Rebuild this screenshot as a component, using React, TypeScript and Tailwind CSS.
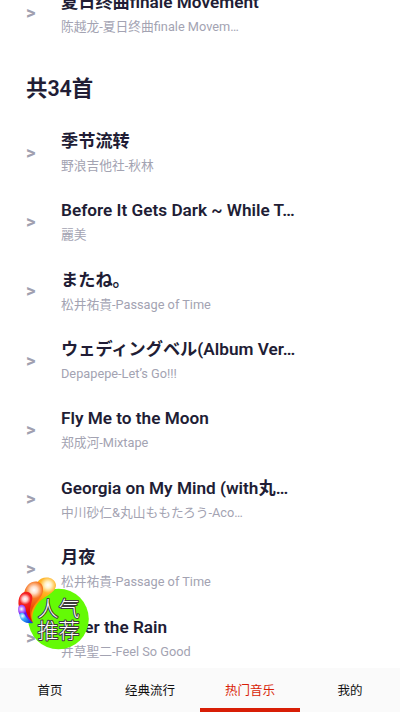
const songs = [
  { title: "夏日终曲finale Movement", sub: "陈越龙-夏日终曲finale Movem…" },
  { title: "季节流转", sub: "野浪吉他社-秋林" },
  { title: "Before It Gets Dark ~ While T…", sub: "麗美" },
  { title: "またね。", sub: "松井祐貴-Passage of Time" },
  { title: "ウェディングベル(Album Ver…", sub: "Depapepe-Let’s Go!!!" },
  { title: "Fly Me to the Moon", sub: "郑成河-Mixtape" },
  { title: "Georgia on My Mind (with丸…", sub: "中川砂仁&丸山ももたろう-Aco…" },
  { title: "月夜", sub: "松井祐貴-Passage of Time" },
  { title: "After the Rain", sub: "井草聖二-Feel So Good" },
];

const tabs = ["首页", "经典流行", "热门音乐", "我的"];

function Song({ title, sub }: { title: string; sub: string }) {
  return (
    <li className="flex h-[69.4px] shrink-0 items-center whitespace-nowrap">
      <span className="w-[35px] shrink-0 pb-[1.5px] text-[18.5px] font-bold leading-6 text-[#a0a0b0]">&gt;</span>
      <div>
        <div className="h-[25px] text-[17.2px] font-semibold leading-[25px] text-[#211d35]">{title}</div>
        <div className="h-6 text-[12.75px] leading-6 text-[#a3a3b2]">{sub}</div>
      </div>
    </li>
  );
}

function Badge() {
  return (
    <svg className="absolute left-[16px] top-[575px]" width="76" height="76" viewBox="0 0 76 76">
      <defs>
        <radialGradient id="yellow" gradientUnits="userSpaceOnUse" cx="32" cy="10" r="16">
          <stop offset="0" stopColor="#fff" /><stop offset="0.2" stopColor="#fff2c8" /><stop offset="0.5" stopColor="#ffb629" /><stop offset="1" stopColor="#ff9b00" />
        </radialGradient>
        <radialGradient id="orange" gradientUnits="userSpaceOnUse" cx="18" cy="15" r="17">
          <stop offset="0" stopColor="#fff" /><stop offset="0.2" stopColor="#ffe0cc" /><stop offset="0.5" stopColor="#f77722" /><stop offset="1" stopColor="#ee5005" />
        </radialGradient>
        <radialGradient id="red" gradientUnits="userSpaceOnUse" cx="9" cy="24" r="14">
          <stop offset="0" stopColor="#fff" /><stop offset="0.18" stopColor="#ffcaca" /><stop offset="0.4" stopColor="#f52222" /><stop offset="1" stopColor="#e50a00" />
        </radialGradient>
        <radialGradient id="violet" gradientUnits="userSpaceOnUse" cx="5.5" cy="34" r="7">
          <stop offset="0" stopColor="#fff" /><stop offset="0.4" stopColor="#b46bff" /><stop offset="0.8" stopColor="#6513ef" />
        </radialGradient>
        <radialGradient id="blue" gradientUnits="userSpaceOnUse" cx="6.5" cy="41" r="9">
          <stop offset="0" stopColor="#fff" /><stop offset="0.35" stopColor="#39aaff" /><stop offset="1" stopColor="#064edb" />
        </radialGradient>
      </defs>
      <circle cx="42.5" cy="44" r="30.3" fill="#64fa05" />
      <path d="M21 8C25 0 39 1 40 10C40 19 26 21 20 31C16 38 16 42 17 48L13 34Z" fill="url(#yellow)" />
      <path d="M8 20C9 4 26 3 27 13C28 22 20 26 17 33C14 39 15.500 44 17 48L9 34Z" fill="url(#orange)" />
      <path d="M3 32C0 19 10 13 15 19C20 25 9 33 17 48C9 43 4 39 3 32Z" fill="url(#red)" />
      <path d="M2 34C2 29 8 28 9.500 33C10 39 13 44 17 48C8 44 2 41 2 34Z" fill="url(#violet)" />
      <path d="M3.500 40C4 37 7.500 37 9 40C10 43 13 45 17 48C10 49 4 46 3.500 40Z" fill="url(#blue)" />
      <g fill="#fff" stroke="#3c3c3c" strokeWidth="2" strokeLinejoin="round" paintOrder="stroke" textAnchor="middle" fontWeight="300" fontSize="21" fontFamily="'Noto Sans CJK SC', sans-serif">
        <text x="42.500" y="41">人气</text>
        <text x="42.500" y="63">推荐</text>
      </g>
    </svg>
  );
}

export default function App() {
  return (
    <div className="relative flex h-[712px] w-[400px] flex-col overflow-hidden bg-white font-[Roboto,'Noto_Sans_CJK_SC',sans-serif]">
      <main className="min-h-0 flex-1 overflow-hidden px-[26px]">
        <ul className="-mt-[20.6px]">
          <Song {...songs[0]} />
        </ul>
        <h2 className="mt-[24px] h-8 text-[21.4px] font-semibold leading-8 text-[#211d35]">共34首</h2>
        <ul className="mt-[13.8px]">
          {songs.slice(1).map((song) => (
            <Song key={song.title} {...song} />
          ))}
        </ul>
      </main>
      <nav className="grid h-11 shrink-0 grid-cols-4 bg-[#fafafa] text-[12.5px] text-[#111]">
        {tabs.map((tab) => (
          <button
            key={tab}
            className={
              tab === "热门音乐"
                ? "border-b-4 border-[#d81e06] pt-1.5 text-[#d81e06]"
                : "border-b-4 border-transparent pt-1.5"
            }
          >
            {tab}
          </button>
        ))}
      </nav>
      <Badge />
    </div>
  );
}
